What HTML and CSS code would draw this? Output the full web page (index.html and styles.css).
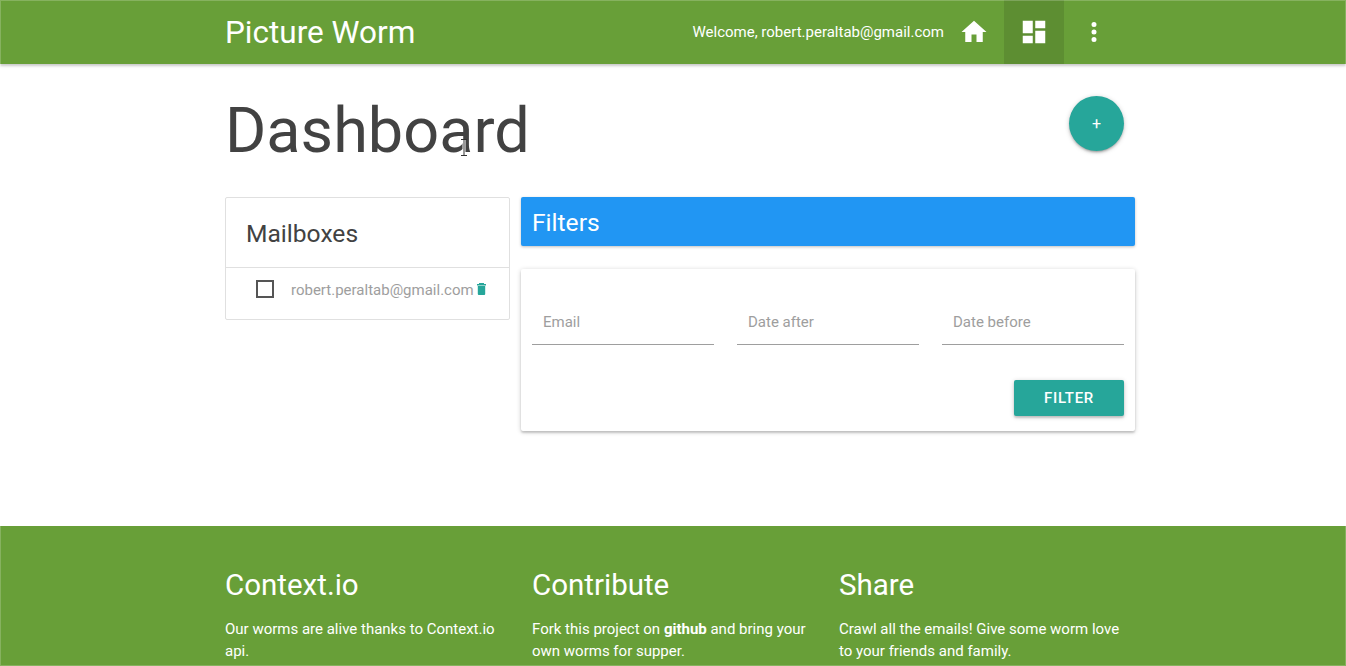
FILE: index.html
```html
<!DOCTYPE html>
<html lang="en">
<head>
    <meta charset="UTF-8">
    <meta name="viewport" content="width=device-width, initial-scale=1.0">
    <title>Picture Worm</title>
    <link rel="stylesheet" href="styles.css">
</head>
<body>
    <nav class="navbar">
        <div class="container nav-inner">
            <a class="brand">Picture Worm</a>
            <div class="nav-right">
                <span class="welcome">Welcome, robert.peraltab@gmail.com</span>
                <a class="nav-icon">
                    <svg width="30" height="30" viewBox="0 0 24 24"><path d="M10 20v-6h4v6h5v-8h3L12 3 2 12h3v8z"/></svg>
                </a>
                <a class="nav-icon active">
                    <svg width="30" height="30" viewBox="0 0 24 24"><path d="M3 13h8V3H3zm0 8h8v-6H3zm10 0h8V11h-8zm0-18v6h8V3z"/></svg>
                </a>
                <a class="nav-icon">
                    <svg width="30" height="30" viewBox="0 0 24 24"><path d="M12 8a2 2 0 1 0 0-4 2 2 0 0 0 0 4zm0 2a2 2 0 1 0 0 4 2 2 0 0 0 0-4zm0 6a2 2 0 1 0 0 4 2 2 0 0 0 0-4z"/></svg>
                </a>
            </div>
        </div>
    </nav>

    <main class="container main">
        <div class="page-head">
            <h1>Dashboard</h1>
            <button class="fab">+</button>
            <svg class="cursor" width="8" height="17" viewBox="0 0 8 17">
                <path d="M4 1v15" fill="none" stroke="#fff" stroke-width="3"/>
                <path d="M1 .5h6M4 .5v16M1 16.500h6" fill="none" stroke="#333" stroke-width="1"/>
            </svg>
        </div>

        <div class="columns">
            <section class="mailboxes">
                <h4>Mailboxes</h4>
                <div class="mailbox-row">
                    <span class="checkbox"></span>
                    <span class="mailbox-name">robert.peraltab@gmail.com</span>
                    <svg class="trash" width="9" height="12" viewBox="0 0 9 12"><path d="M2 0h5v1h2v1.5H0V1h2zM.8 3h7.4v8a1 1 0 0 1-1 1H1.800a1 1 0 0 1-1-1z"/></svg>
                </div>
            </section>

            <div class="filters">
                <div class="filters-title">Filters</div>
                <div class="filters-card">
                    <div class="fields">
                        <div class="field">Email</div>
                        <div class="field">Date after</div>
                        <div class="field">Date before</div>
                    </div>
                    <div class="actions">
                        <button class="btn">FILTER</button>
                    </div>
                </div>
            </div>
        </div>
    </main>

    <footer class="footer">
        <div class="container footer-cols">
            <div>
                <h5>Context.io</h5>
                <p>Our worms are alive thanks to Context.io api.</p>
            </div>
            <div>
                <h5>Contribute</h5>
                <p>Fork this project on <b>github</b> and bring your own worms for supper.</p>
            </div>
            <div>
                <h5>Share</h5>
                <p>Crawl all the emails! Give some worm love to your friends and family.</p>
            </div>
        </div>
    </footer>
</body>
</html>
```

FILE: styles.css
```css
html, body {
    height: 100%;
}
body {
    margin: 0;
    font-family: Roboto, sans-serif;
    background: #fff;
    color: #424242;
    display: flex;
    flex-direction: column;
    overflow: hidden;
}
/* thin light edge round the whole window */
body::after {
    content: "";
    position: fixed;
    top: 0;
    right: 0;
    bottom: 0;
    left: 0;
    border: 1px solid rgba(255,255,255,0.2);
    pointer-events: none;
}
.container {
    width: 910px;
    margin-left: 225px;
}
.navbar {
    flex: none;
    height: 64px;
    background: #689f38;
    color: #fff;
    box-shadow: 0 2px 2px rgba(0,0,0,0.14), 0 1px 5px rgba(0,0,0,0.12);
    position: relative;
}
.nav-inner {
    display: flex;
    justify-content: space-between;
    height: 64px;
}
.brand {
    font-size: 31.5px;
    line-height: 66px;
}
.nav-right {
    display: flex;
    align-items: center;
    height: 64px;
    padding-right: 11px;
}
.welcome {
    font-size: 15px;
}
.nav-icon {
    width: 60px;
    height: 64px;
    display: flex;
    align-items: center;
    justify-content: center;
}
.nav-icon svg {
    fill: #fff;
}
.nav-icon.active {
    background: rgba(0,0,0,0.1);
}
.main {
    flex: 1;
}
.page-head {
    display: flex;
    justify-content: space-between;
    align-items: flex-start;
    height: 133px;
    position: relative;
}
h1 {
    margin: 29px 0 0;
    font-size: 63px;
    font-weight: 400;
    line-height: 76px;
}
.fab {
    width: 55px;
    height: 55px;
    margin: 32px 11px 0 0;
    border: none;
    border-radius: 50%;
    background: #26a69a;
    color: #fff;
    font-family: Roboto, sans-serif;
    font-size: 16px;
    box-shadow: 0 2px 2px rgba(0,0,0,0.14), 0 1px 5px rgba(0,0,0,0.2), 0 3px 1px -2px rgba(0,0,0,0.12);
}
.cursor {
    position: absolute;
    left: 235px;
    top: 75px;
}
.columns {
    display: flex;
    gap: 11px;
    align-items: flex-start;
}
.mailboxes {
    width: 283px;
    border: 1px solid #e0e0e0;
    border-radius: 2px;
}
h4 {
    margin: 0;
    padding: 2px 0 0 20px;
    font-size: 24.6px;
    font-weight: 400;
    line-height: 67px;
    border-bottom: 1px solid #e0e0e0;
}
.mailbox-row {
    display: flex;
    align-items: flex-start;
    height: 39px;
    padding: 12px 0 0 30px;
    font-size: 15px;
    line-height: 20px;
    color: #9e9e9e;
}
.checkbox {
    width: 14px;
    height: 14px;
    border: 2px solid #555;
    margin-right: 17px;
}
.trash {
    fill: #26a69a;
    margin: 3px 0 0 3px;
}
.filters {
    width: 614px;
}
.filters-title {
    height: 49px;
    line-height: 51px;
    padding-left: 11px;
    font-size: 24.6px;
    color: #fff;
    background: #2196f3;
    border-radius: 2px;
    box-shadow: 0 1px 3px rgba(0,0,0,0.25);
}
.filters-card {
    margin-top: 23px;
    padding: 11px;
    height: 140px;
    border-radius: 2px;
    box-shadow: 0 2px 2px rgba(0,0,0,0.14), 0 1px 5px rgba(0,0,0,0.2);
}
.fields {
    display: flex;
    gap: 23px;
    margin-top: 15px;
}
.field {
    flex: 1;
    height: 45px;
    padding: 4px 0 0 11px;
    line-height: 46px;
    font-size: 15px;
    color: #9e9e9e;
    border-bottom: 1px solid #9e9e9e;
}
.actions {
    display: flex;
    justify-content: flex-end;
    margin-top: 35px;
}
.btn {
    width: 110px;
    height: 36px;
    border: none;
    border-radius: 2px;
    background: #26a69a;
    color: #fff;
    font-family: Roboto, sans-serif;
    font-size: 15px;
    font-weight: 500;
    letter-spacing: 0.7px;
    box-shadow: 0 2px 2px rgba(0,0,0,0.14), 0 1px 5px rgba(0,0,0,0.2);
}
.footer {
    flex: none;
    height: 140px;
    background: #689f38;
    color: #fff;
}
.footer-cols {
    display: grid;
    grid-template-columns: repeat(3, 1fr);
    column-gap: 11px;
}
h5 {
    margin: 0;
    padding-top: 39px;
    font-size: 29.5px;
    font-weight: 400;
    line-height: 40px;
}
.footer p {
    margin: 13px 0 0;
    font-size: 15px;
    line-height: 22px;
}
```
